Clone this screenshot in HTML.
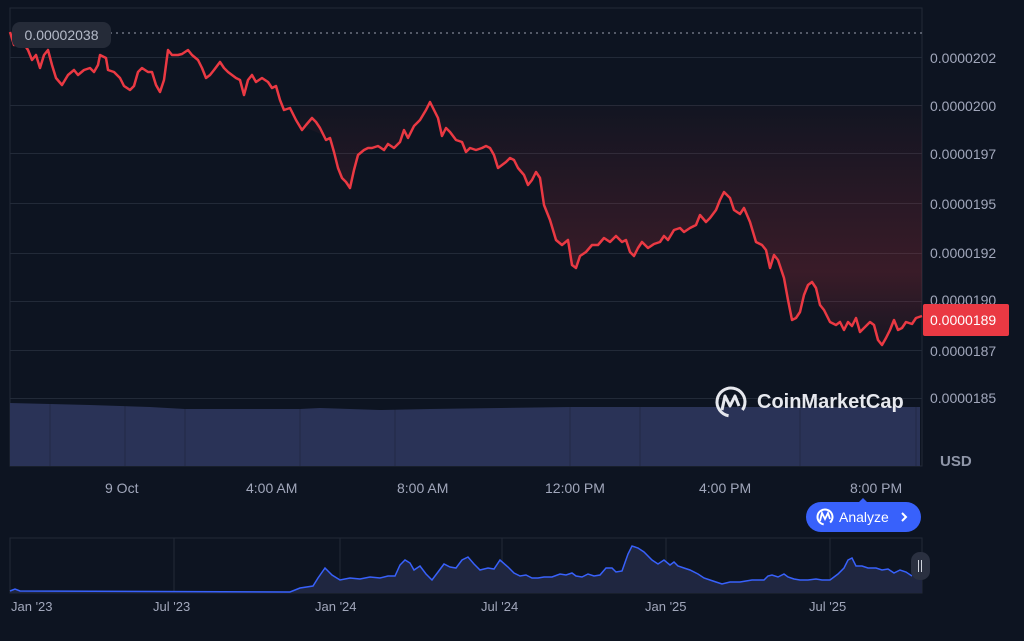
<!DOCTYPE html>
<html><head><style>
body{margin:0;width:1024px;height:641px;background:#0d1421;font-family:"Liberation Sans",sans-serif;overflow:hidden;position:relative}
.t{position:absolute;color:#a1a7bb;font-size:14px}
</style></head><body>
<svg width="1024" height="641" style="position:absolute;left:0;top:0">
<defs>
<linearGradient id="rg" x1="0" y1="0" x2="0" y2="1"><stop offset="0" stop-color="#ea3943" stop-opacity="0.02"/><stop offset="0.7" stop-color="#ea3943" stop-opacity="0.2"/><stop offset="1" stop-color="#ea3943" stop-opacity="0.05"/></linearGradient>
</defs>
<rect x="10" y="8" width="912" height="458" fill="none" stroke="#222a38"/>
<g stroke="#222a38" stroke-width="1">
<line x1="10" y1="57.5" x2="922" y2="57.5"/><line x1="10" y1="105.5" x2="922" y2="105.5"/><line x1="10" y1="153.5" x2="922" y2="153.5"/><line x1="10" y1="203.5" x2="922" y2="203.5"/><line x1="10" y1="253.5" x2="922" y2="253.5"/><line x1="10" y1="301.5" x2="922" y2="301.5"/><line x1="10" y1="350.5" x2="922" y2="350.5"/><line x1="10" y1="398.5" x2="922" y2="398.5"/>
</g>
<line x1="110" y1="33" x2="922" y2="33" stroke="#9aa0b0" stroke-dasharray="2 4"/>
<path id="p" d="M10,32 L14,45 20,38 28,50 32,60 36,55 40,68 44,55 48,50 52,65 56,78 62,85 68,75 74,70 78,75 84,70 90,68 94,72 98,65 100,55 106,58 108,70 114,72 120,78 124,86 130,90 134,86 138,72 142,68 148,72 152,72 156,85 160,92 164,80 168,50 172,55 178,55 182,54 188,50 192,55 198,60 202,68 206,78 210,75 214,70 220,62 224,68 228,72 232,75 236,78 240,80 244,95 248,80 252,75 256,82 262,78 268,82 272,88 276,86 280,100 284,110 290,108 296,120 302,130 306,125 312,118 316,122 320,128 326,140 330,138 334,152 338,168 342,178 346,182 350,188 354,170 358,155 364,150 368,148 372,148 378,146 384,150 388,144 394,148 400,142 404,130 408,138 414,126 420,120 426,110 430,102 434,110 438,118 442,136 446,128 450,132 456,140 462,142 466,152 470,148 476,150 482,148 486,146 490,148 494,155 498,168 502,165 506,162 510,158 514,160 518,168 524,175 528,185 532,180 536,172 540,178 544,205 550,220 556,240 562,245 568,240 572,265 576,268 580,256 586,252 592,245 598,245 604,238 610,242 616,236 622,242 626,240 630,252 634,256 638,248 642,242 648,248 654,244 660,242 664,236 668,240 674,230 680,228 684,232 690,228 696,225 700,215 706,222 710,218 716,210 720,200 724,192 730,198 734,210 740,214 744,208 750,222 756,242 762,245 766,250 770,268 774,255 778,260 784,278 788,300 792,320 796,318 800,312 804,295 808,285 812,282 816,288 820,305 824,310 830,322 836,325 840,322 844,330 848,322 852,326 856,318 860,332 864,328 870,322 874,325 878,340 882,345 886,338 890,330 894,320 898,330 902,328 906,322 912,324 916,318 922,316" fill="none"/>
<path d="M300,105 L300,125 330,138 334,152 338,168 342,178 346,182 350,188 354,170 358,155 364,150 368,148 372,148 378,146 384,150 388,144 394,148 400,142 404,130 408,138 414,126 420,120 426,110 430,102 434,110 438,118 442,136 446,128 450,132 456,140 462,142 466,152 470,148 476,150 482,148 486,146 490,148 494,155 498,168 502,165 506,162 510,158 514,160 518,168 524,175 528,185 532,180 536,172 540,178 544,205 550,220 556,240 562,245 568,240 572,265 576,268 580,256 586,252 592,245 598,245 604,238 610,242 616,236 622,242 626,240 630,252 634,256 638,248 642,242 648,248 654,244 660,242 664,236 668,240 674,230 680,228 684,232 690,228 696,225 700,215 706,222 710,218 716,210 720,200 724,192 730,198 734,210 740,214 744,208 750,222 756,242 762,245 766,250 770,268 774,255 778,260 784,278 788,300 792,320 796,318 800,312 804,295 808,285 812,282 816,288 820,305 824,310 830,322 836,325 840,322 844,330 848,322 852,326 856,318 860,332 864,328 870,322 874,325 878,340 882,345 886,338 890,330 894,320 898,330 902,328 906,322 912,324 916,318 922,316 L922,105 Z" fill="url(#rg)"/>
<path d="M10,403 L90,405 150,407 185,409 300,409 320,408 380,410 430,409 570,407 920,407 L920,466 L10,466 Z" fill="#2a3357"/>
<g stroke="#0d1421" stroke-opacity="0.3" stroke-width="1">
<line x1="50" y1="403" x2="50" y2="466"/><line x1="125" y1="406" x2="125" y2="466"/><line x1="185" y1="408" x2="185" y2="466"/><line x1="300" y1="408" x2="300" y2="466"/><line x1="395" y1="408" x2="395" y2="466"/><line x1="570" y1="406" x2="570" y2="466"/><line x1="640" y1="406" x2="640" y2="466"/><line x1="800" y1="406" x2="800" y2="466"/><line x1="916" y1="406" x2="916" y2="466"/>
</g>
<use href="#p" stroke="#ea3943" stroke-width="2.5" stroke-linejoin="round"/>
<circle cx="731" cy="402" r="14" fill="none" stroke="#e6e8ee" stroke-width="3" stroke-dasharray="72 16" transform="rotate(100 731 402)"/>
<path d="M722,410 L725,396 L730,406 L735,396 L739,406" fill="none" stroke="#e6e8ee" stroke-width="3" stroke-linejoin="round"/>
<rect x="10" y="538" width="912" height="55" fill="none" stroke="#222a38"/>
<g stroke="#222a38"><line x1="174" y1="538" x2="174" y2="593"/><line x1="340" y1="538" x2="340" y2="593"/><line x1="502" y1="538" x2="502" y2="593"/><line x1="666" y1="538" x2="666" y2="593"/><line x1="830" y1="538" x2="830" y2="593"/></g>
<path d="M10,591 L15,589 20,591 290,592 300,588 313,586 318,578 325,568 332,575 340,580 350,578 360,579 370,577 380,578 388,576 395,576 400,565 405,560 410,563 414,570 420,566 426,574 432,580 438,572 444,564 450,567 456,568 462,560 468,557 474,564 480,570 488,568 494,569 500,560 508,567 514,573 520,576 526,575 532,578 538,578 544,577 552,577 560,574 566,575 572,573 576,576 582,577 588,574 594,576 600,575 606,568 612,568 616,572 622,571 628,554 632,546 638,548 644,552 652,560 658,564 664,560 670,565 674,562 678,566 684,568 690,570 698,574 704,578 710,580 716,582 722,584 730,582 740,582 746,581 752,580 758,580 764,580 768,576 772,575 778,577 784,574 788,577 794,579 800,580 808,580 816,579 822,580 830,580 838,574 844,568 848,560 852,558 856,566 862,566 868,568 876,568 882,570 888,569 894,573 900,570 906,572 912,576 L922,576 L922,593 L10,593 Z" fill="#1f2640"/>
<path d="M10,591 L15,589 20,591 290,592 300,588 313,586 318,578 325,568 332,575 340,580 350,578 360,579 370,577 380,578 388,576 395,576 400,565 405,560 410,563 414,570 420,566 426,574 432,580 438,572 444,564 450,567 456,568 462,560 468,557 474,564 480,570 488,568 494,569 500,560 508,567 514,573 520,576 526,575 532,578 538,578 544,577 552,577 560,574 566,575 572,573 576,576 582,577 588,574 594,576 600,575 606,568 612,568 616,572 622,571 628,554 632,546 638,548 644,552 652,560 658,564 664,560 670,565 674,562 678,566 684,568 690,570 698,574 704,578 710,580 716,582 722,584 730,582 740,582 746,581 752,580 758,580 764,580 768,576 772,575 778,577 784,574 788,577 794,579 800,580 808,580 816,579 822,580 830,580 838,574 844,568 848,560 852,558 856,566 862,566 868,568 876,568 882,570 888,569 894,573 900,570 906,572 912,576" fill="none" stroke="#3861fb" stroke-width="1.5"/>
<rect x="911" y="552" width="19" height="28" rx="9" fill="#2a3040"/>
<line x1="918.5" y1="560" x2="918.5" y2="572" stroke="#cfd3dc"/><line x1="921.5" y1="560" x2="921.5" y2="572" stroke="#cfd3dc"/>
<path d="M858,503 L863,498 L868,503 Z" fill="#3861fb"/>
<rect x="806" y="502" width="115" height="30" rx="15" fill="#3861fb"/>
<circle cx="825" cy="517" r="7.5" fill="none" stroke="#fff" stroke-width="2" stroke-dasharray="40 8" transform="rotate(100 825 517)"/>
<path d="M820,521 L822,513 L825,519 L828,513 L830,519" fill="none" stroke="#fff" stroke-width="1.8"/>
<path d="M902,513 L906,517 L902,521" fill="none" stroke="#fff" stroke-width="2"/>
</svg>
<div style="position:absolute;left:12px;top:22px;width:99px;height:26px;border-radius:8px;background:#252b38;color:#b4bac8;font-size:14px;line-height:26px;text-align:center">0.00002038</div>
<div class="t" style="left:930px;top:50px">0.0000202</div>
<div class="t" style="left:930px;top:98px">0.0000200</div>
<div class="t" style="left:930px;top:146px">0.0000197</div>
<div class="t" style="left:930px;top:196px">0.0000195</div>
<div class="t" style="left:930px;top:245px">0.0000192</div>
<div class="t" style="left:930px;top:292px">0.0000190</div>
<div class="t" style="left:930px;top:343px">0.0000187</div>
<div class="t" style="left:930px;top:390px">0.0000185</div>
<div style="position:absolute;left:923px;top:304px;width:86px;height:32px;background:#ea3943;border-radius:2px;color:#fff;font-size:14px;line-height:32px;padding-left:7px;box-sizing:border-box">0.0000189</div>
<div class="t" style="left:940px;top:453px;font-weight:bold;font-size:15px;color:#8f96a8">USD</div>
<div style="position:absolute;left:757px;top:391px;color:#e6e8ee;font-size:20px;font-weight:bold">CoinMarketCap</div>
<div class="t" style="left:105px;top:480px">9 Oct</div>
<div class="t" style="left:246px;top:480px">4:00 AM</div>
<div class="t" style="left:397px;top:480px">8:00 AM</div>
<div class="t" style="left:545px;top:480px">12:00 PM</div>
<div class="t" style="left:699px;top:480px">4:00 PM</div>
<div class="t" style="left:850px;top:480px">8:00 PM</div>
<div style="position:absolute;left:839px;top:509px;color:#fff;font-size:14px">Analyze</div>
<div class="t" style="left:11px;top:599px;font-size:13px">Jan '23</div>
<div class="t" style="left:153px;top:599px;font-size:13px">Jul '23</div>
<div class="t" style="left:315px;top:599px;font-size:13px">Jan '24</div>
<div class="t" style="left:481px;top:599px;font-size:13px">Jul '24</div>
<div class="t" style="left:645px;top:599px;font-size:13px">Jan '25</div>
<div class="t" style="left:809px;top:599px;font-size:13px">Jul '25</div>
</body></html>
